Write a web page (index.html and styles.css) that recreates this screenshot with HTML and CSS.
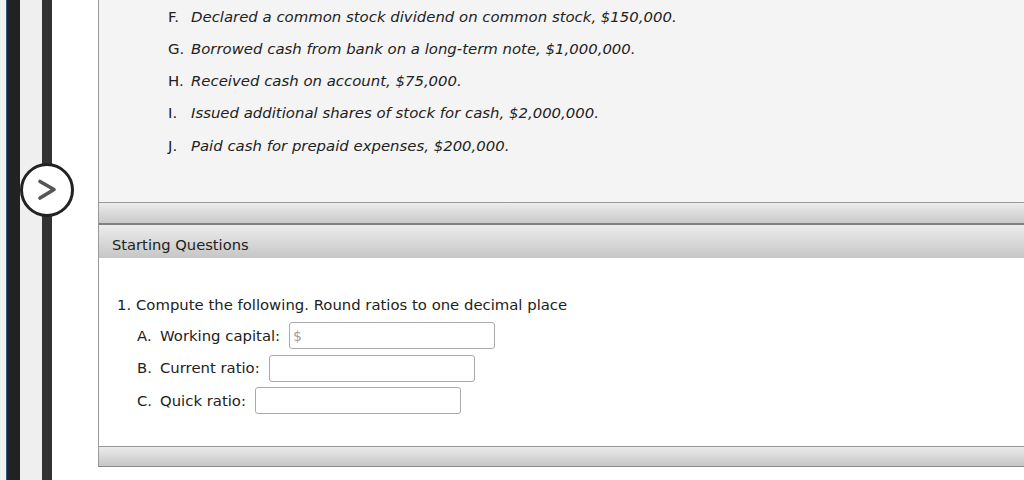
FILE: index.html
```html
<!DOCTYPE html>
<html>
<head>
<meta charset="utf-8">
<link rel="stylesheet" href="styles.css">
</head>
<body>
<div class="page">
  <div class="rail">
    <div class="s s1"></div>
    <div class="s s2"></div>
    <div class="s s3"></div>
    <div class="s s4"></div>
    <div class="s s5"></div>
    <div class="s s6"></div>
    <div class="nav-btn">
      <svg width="54" height="54" viewBox="0 0 54 54">
        <circle cx="27" cy="27" r="25.5" fill="#fff" stroke="#222" stroke-width="3"/>
        <path d="M20 18.5 L34 26.5 L20 35" fill="none" stroke="#555" stroke-width="3.6" stroke-linecap="round" stroke-linejoin="round"/>
      </svg>
    </div>
  </div>
  <div class="panel">
    <div class="intro">
      <ol class="trans">
        <li><span class="mk">F.</span><em>Declared a common stock dividend on common stock, $150,000.</em></li>
        <li><span class="mk">G.</span><em>Borrowed cash from bank on a long-term note, $1,000,000.</em></li>
        <li><span class="mk">H.</span><em>Received cash on account, $75,000.</em></li>
        <li><span class="mk">I.</span><em>Issued additional shares of stock for cash, $2,000,000.</em></li>
        <li><span class="mk">J.</span><em>Paid cash for prepaid expenses, $200,000.</em></li>
      </ol>
    </div>
    <div class="bar"></div>
    <div class="head">Starting Questions</div>
    <div class="body">
      <div class="q"><span class="qn">1.</span>Compute the following. Round ratios to one decimal place</div>
      <div class="row"><span class="mk2">A.</span><span class="lab">Working capital:</span><span class="inp"><span class="ph">$</span></span></div>
      <div class="row"><span class="mk2">B.</span><span class="lab">Current ratio:</span><span class="inp"></span></div>
      <div class="row"><span class="mk2">C.</span><span class="lab">Quick ratio:</span><span class="inp"></span></div>
    </div>
    <div class="foot"></div>
  </div>
</div>
</body>
</html>
```
FILE: styles.css
```css
html, body {
  margin: 0;
  padding: 0;
  background: #fff;
}
body {
  font-family: Verdana, "DejaVu Sans", sans-serif;
  color: #222;
  width: 1024px;
  height: 480px;
  overflow: hidden;
}
.page {
  display: flex;
  height: 480px;
}
.rail {
  position: relative;
  display: flex;
  width: 98px;
  flex: 0 0 98px;
}
.s { height: 100%; }
.s1 { width: 6px; background: #f0f0f0; }
.s2 { width: 1px; background: #2f5b86; }
.s3 { width: 13px; background: #222; }
.s4 { width: 22px; background: #efefef; }
.s5 { width: 10px; background: #333; }
.s6 { width: 46px; background: #fff; }
.nav-btn {
  position: absolute;
  left: 20px;
  top: 163px;
  width: 54px;
  height: 54px;
}
.nav-btn svg { display: block; }
.panel {
  flex: 1;
  display: flex;
  flex-direction: column;
  border-left: 1px solid #999;
  height: 467px;
  box-sizing: border-box;
  border-bottom: 1px solid #8a8a8a;
}
.intro {
  background: #f4f4f4;
  height: 202px;
  box-sizing: border-box;
  padding-top: 0.5px;
}
.trans {
  list-style: none;
  margin: 0;
  padding: 0 0 0 69px;
  font-size: 14.9px;
  line-height: 32.3px;
  color: #222;
}
.trans li { display: flex; }
.mk { width: 23px; font-style: normal; }
.trans em { font-style: italic; }
.bar {
  height: 20px;
  border-top: 1px solid #999;
  border-bottom: 2px solid #808080;
  background: linear-gradient(#ececec, #c9c9c9);
}
.head {
  height: 33px;
  box-sizing: border-box;
  padding: 11px 0 0 13px;
  font-size: 14.7px;
  line-height: 17px;
  color: #222;
  background: linear-gradient(#ececec, #c6c6c6);
}
.body {
  flex: 1;
  background: #fff;
  padding: 37px 0 0 18px;
  font-size: 14.85px;
  border-bottom: 1px solid #999;
}
.q {
  display: flex;
  line-height: 20px;
  height: 20px;
}
.qn { width: 19px; }
.row {
  display: flex;
  align-items: center;
  margin: 5px 0 0 20px;
  height: 27.5px;
}
.q + .row { margin-top: 7px; }
.mk2 { width: 23px; }
.lab { margin-right: 9px; }
.inp {
  display: flex;
  align-items: center;
  width: 206px;
  height: 27px;
  box-sizing: border-box;
  border: 1px solid #aaa;
  border-radius: 3px;
  background: #fff;
  padding-left: 3px;
}
.ph { color: #a0a0a0; font-size: 14px; }
.foot {
  height: 19px;
  background: linear-gradient(#ebebeb, #c6c6c6);
}
```
